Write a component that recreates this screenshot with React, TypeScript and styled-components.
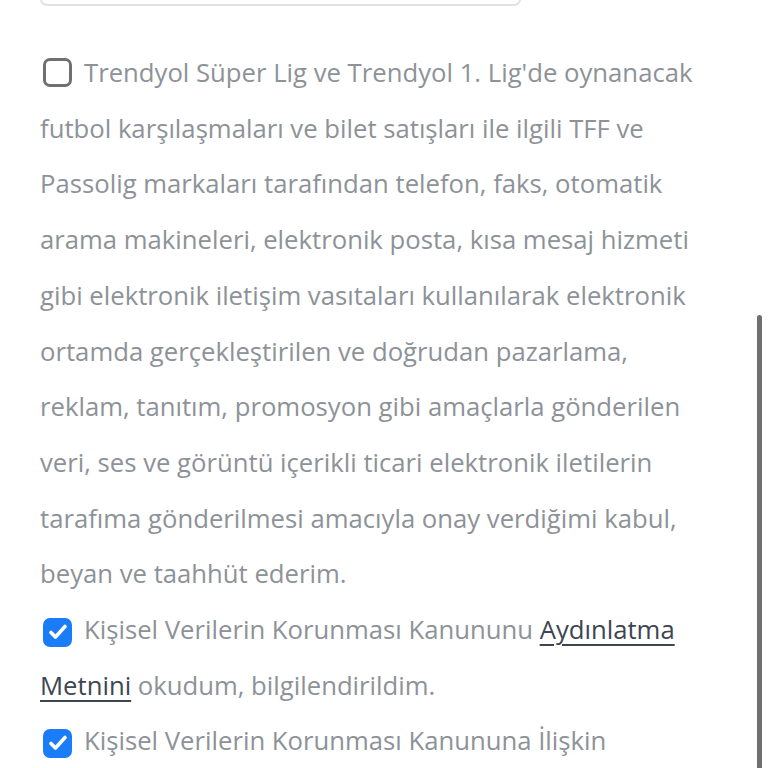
import React, { ReactElement } from 'react';
import styled, { createGlobalStyle } from 'styled-components';

type ConsentType = {
  id: string;
  checked: boolean;
  content: React.ReactNode;
};

const GlobalStyle = createGlobalStyle`
  html, body {
    margin: 0;
    background: #ffffff;
    overflow: hidden;
  }
`;

const Page = styled.div`
  padding: 0 40px;
  width: 768px;
  box-sizing: border-box;
  font-family: 'Open Sans', 'Noto Sans', sans-serif;
`;

// 상단 입력창 (스크롤로 잘린 부분)
const InputBox = styled.div`
  width: 481px;
  height: 50px;
  margin-top: -44px;
  box-sizing: border-box;
  border: 2px solid #e2e2e2;
  border-radius: 7px;
`;

const ConsentList = styled.div`
  margin-top: 39px;
  width: 680px;
`;

const ConsentRow = styled.p`
  margin: 0;
  font-size: 25.7px;
  line-height: 55.7px;
  color: #8d9298;
`;

const Box = styled.span<{ $checked: boolean }>`
  display: inline-flex;
  align-items: center;
  justify-content: center;
  width: 29px;
  height: 29px;
  margin: 0 12px 0 3px;
  vertical-align: -5px;
  box-sizing: border-box;
  border-radius: 7px;
  border: ${({ $checked }) => ($checked ? 'none' : '3px solid #707070')};
  background-color: ${({ $checked }) => ($checked ? '#1a7cf6' : '#ffffff')};
`;

const Link = styled.a<{ $nowrap?: boolean }>`
  color: #3d4651;
  text-decoration: underline;
  text-underline-offset: 5px;
  text-decoration-thickness: 2px;
  white-space: ${({ $nowrap }) => ($nowrap ? 'nowrap' : 'normal')};
`;

const ScrollThumb = styled.div`
  position: fixed;
  top: 315px;
  right: 6px;
  width: 5px;
  height: 460px;
  border-radius: 3px;
  background-color: #6f6f6f;
`;

const consents: ConsentType[] = [
  {
    id: 'commercial',
    checked: false,
    content:
      "Trendyol Süper Lig ve Trendyol 1. Lig'de oynanacak futbol karşılaşmaları ve bilet satışları ile ilgili TFF ve Passolig markaları tarafından telefon, faks, otomatik arama makineleri, elektronik posta, kısa mesaj hizmeti gibi elektronik iletişim vasıtaları kullanılarak elektronik ortamda gerçekleştirilen ve doğrudan pazarlama, reklam, tanıtım, promosyon gibi amaçlarla gönderilen veri, ses ve görüntü içerikli ticari elektronik iletilerin tarafıma gönderilmesi amacıyla onay verdiğimi kabul, beyan ve taahhüt ederim.",
  },
  {
    id: 'kvkk',
    checked: true,
    content: (
      <>
        Kişisel Verilerin Korunması Kanununu <Link href="#">Aydınlatma Metnini</Link> okudum,
        bilgilendirildim.
      </>
    ),
  },
  {
    id: 'consent',
    checked: true,
    content: (
      <>
        Kişisel Verilerin Korunması Kanununa İlişkin{' '}
        <Link href="#" $nowrap>
          Açık Rıza Metnini
        </Link>{' '}
        okudum, onaylıyorum.
      </>
    ),
  },
];

const App = (): ReactElement => (
  <>
    <GlobalStyle />
    <Page>
      <InputBox />
      <ConsentList>
        {consents.map((item) => (
          <ConsentRow key={item.id}>
            <Box $checked={item.checked}>
              {item.checked && (
                <svg width="24" height="24" viewBox="0 0 24 24" fill="none">
                  <path
                    d="M5 12.5l4.5 4.5L19 6.5"
                    stroke="#fff"
                    strokeWidth="3.6"
                    strokeLinecap="round"
                    strokeLinejoin="round"
                  />
                </svg>
              )}
            </Box>
            {item.content}
          </ConsentRow>
        ))}
      </ConsentList>
      <ScrollThumb />
    </Page>
  </>
);

export default App;
